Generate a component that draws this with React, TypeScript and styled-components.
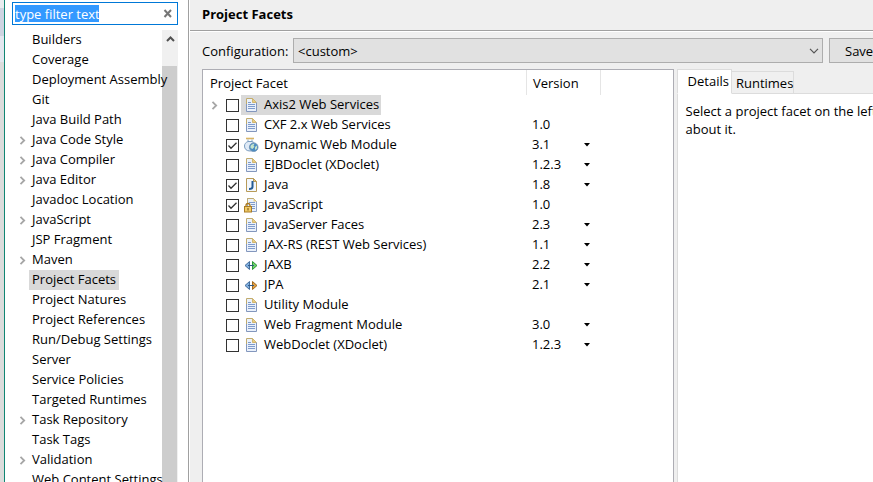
import React, { useState } from "react";
import styled, { createGlobalStyle, css } from "styled-components";

const GlobalStyle = createGlobalStyle`
  * { box-sizing: border-box; }
  body { margin: 0; overflow: hidden; }
  body, button, input, select {
    font-family: "Open Sans", "Noto Sans", sans-serif;
    font-size: 13px;
    line-height: 18px;
    color: #000;
  }
`;

const Desktop = styled.div`
  display: flex;
  height: 100vh;
  overflow: hidden;
  background: #efefef;
`;

const BackdropEdge = styled.div`
  flex: none;
  width: 5px;
  border-right: 1px solid #118673;
  background: linear-gradient(#e9ecef 0 8px, #ced4e1 8px 36px, #e3e7ef 36px 62px, #dcdcdc 62px);
`;

const Sidebar = styled.aside`
  flex: none;
  display: flex;
  flex-direction: column;
  width: 184px;
  padding: 2px 10px 0 7px;
  border-right: 1px solid #a0a0a0;
  background: #fff;
`;

const FilterBox = styled.div`
  flex: none;
  display: flex;
  align-items: center;
  height: 23px;
  border: 1px solid #0078d7;
`;

const FilterInput = styled.input`
  flex: 1;
  min-width: 0;
  height: 17px;
  margin: 0 0 0 2px;
  padding: 0;
  border: 0;
  outline: none;
  color: #fff;
  background: linear-gradient(#3399ff, #3399ff) no-repeat 0 0 / 84px 100%;
`;

const ClearButton = styled.button`
  display: flex;
  padding: 0 4px;
  border: 0;
  background: none;
`;

const TreeArea = styled.div`
  flex: 1;
  display: flex;
  min-height: 0;
  margin-top: 5px;
`;

const Tree = styled.ul`
  flex: 1;
  z-index: 1;
  min-width: 0;
  margin: 0;
  padding: 0;
  list-style: none;
`;

const TreeItem = styled.li`
  display: flex;
  align-items: center;
  height: 20px;
  white-space: nowrap;
`;

const ExpanderSlot = styled.span`
  flex: none;
  display: flex;
  justify-content: center;
  width: 20px;
`;

const TreeLabel = styled.a<{ $selected?: boolean }>`
  margin-left: -3px;
  padding: 0 3px 2px;
  color: inherit;
  text-decoration: none;
  background: ${(p) => (p.$selected ? "#d9d9d9" : "transparent")};
`;

const ScrollTrack = styled.div`
  flex: none;
  display: flex;
  flex-direction: column;
  width: 16px;
  background: #f0f0f0;
`;

const ScrollUp = styled.button`
  display: flex;
  align-items: center;
  justify-content: center;
  height: 36px;
  padding: 0 0 18px;
  border: 0;
  background: none;
`;

const ScrollThumb = styled.div`
  flex: 1;
  margin-right: 1px;
  background: #cdcdcd;
`;

const Main = styled.main`
  flex: 1;
  display: flex;
  flex-direction: column;
  min-width: 0;
  border-left: 1px solid #fff;
`;

const Title = styled.h1`
  margin: 0;
  padding: 5px 12px 7px;
  border-bottom: 1px solid #a0a0a0;
  font-size: 13px;
  line-height: 18px;
`;

const Configuration = styled.div`
  flex: none;
  display: flex;
  align-items: center;
  height: 32px;
  padding: 6px 0 0 12px;
  border-top: 1px solid #fff;
`;

const ConfigLabel = styled.label`
  flex: none;
  width: 91px;
`;

const SelectWrap = styled.span`
  flex: 1;
  display: grid;
  align-items: center;
  height: 25px;
  > * { grid-area: 1 / 1; }
  > svg { justify-self: end; margin-right: 4px; pointer-events: none; }
`;

const Select = styled.select`
  width: 100%;
  height: 25px;
  padding: 0 20px 0 4px;
  border: 1px solid #adadad;
  border-radius: 0;
  appearance: none;
  background: #e1e1e1;
`;

const SaveButton = styled.button`
  flex: none;
  width: 94px;
  height: 25px;
  margin: 0 -50px 0 6px;
  padding: 0 0 0 15px;
  border: 1px solid #adadad;
  background: #e1e1e1;
  text-align: left;
`;

const Panels = styled.div`
  flex: 1;
  display: flex;
  gap: 3px;
  min-height: 0;
  margin-top: 6px;
  padding-left: 12px;
`;

const FacetPane = styled.section`
  flex: 471 1 0;
  min-width: 0;
  overflow: hidden;
  border: 1px solid #adadb4;
  border-bottom: 0;
  background: #fff;
`;

const FacetTable = styled.table`
  width: 100%;
  border-collapse: separate;
  border-spacing: 0;
  table-layout: fixed;
`;

const NameCol = styled.col` width: 324px; `;
const VersionCol = styled.col` width: 74px; `;

const HeadCell = styled.th`
  height: 25px;
  padding: 1px 0 0 6px;
  border-right: 1px solid #e5e5e5;
  font-weight: 400;
  text-align: left;
  &:first-child { padding-left: 7px; }
  &:last-child { border-right: 0; }
`;

const Cell = styled.td`
  height: 20px;
  padding: 0;
`;

const FacetName = styled.div`
  display: flex;
  align-items: center;
  height: 20px;
  padding-left: 1px;
  white-space: nowrap;
`;

const Check = styled.input`
  appearance: none;
  width: 13px;
  height: 13px;
  margin: 0;
  border: 1px solid #333;
  background: #fff;
`;

const CheckBoxWrap = styled.span`
  flex: none;
  display: grid;
  width: 15px;
  margin: 1px 0 0 2px;
  > * { grid-area: 1 / 1; }
  > svg { pointer-events: none; }
`;

const FacetLabel = styled.label<{ $selected?: boolean }>`
  display: flex;
  align-items: center;
  gap: 4px;
  height: 20px;
  padding: 0 2px 0 3px;
  ${(p) => p.$selected && css` background: #d9d9d9; `}
`;

const CellText = styled.span`
  padding-bottom: 2px;
`;

const Version = styled.div`
  display: flex;
  align-items: center;
  height: 20px;
  padding-left: 5px;
`;

const VersionText = styled(CellText)`
  width: 52px;
`;

const VersionMenu = styled.button`
  display: flex;
  padding: 0;
  border: 0;
  background: none;
`;

const DetailPane = styled.section`
  flex: 197 1 0;
  display: flex;
  flex-direction: column;
  min-width: 0;
`;

const TabBar = styled.div`
  flex: none;
  display: flex;
  align-items: flex-end;
  height: 25px;
`;

const Tab = styled.button<{ $active?: boolean }>`
  height: ${(p) => (p.$active ? 25 : 23)}px;
  padding: ${(p) => (p.$active ? "0 2px 2px 10px" : "0 0 0 4px")};
  border: 1px solid #dcdcdc;
  border-left-width: ${(p) => (p.$active ? 1 : 0)}px;
  border-bottom-color: ${(p) => (p.$active ? "#fff" : "#dcdcdc")};
  background: ${(p) => (p.$active ? "#fff" : "#f0f0f0")};
  white-space: nowrap;
`;

const TabFill = styled.span`
  flex: 1;
  border-bottom: 1px solid #dcdcdc;
`;

const Details = styled.div`
  flex: 1;
  padding: 8px 0 0 8px;
  overflow: hidden;
  border-left: 1px solid #dcdcdc;
  background: #fff;
  white-space: nowrap;
`;

const DetailLine = styled.p`
  margin: 0;
`;

const Expander = () => (
  <svg width="7" height="9" viewBox="0 0 7 9" fill="none" stroke="#a6a6a6" strokeWidth="1.8">
    <path d="M1.5 .8 5.2 4.5 1.5 8.2" />
  </svg>
);

const PageIcon = () => (
  <svg width="16" height="16" viewBox="0 0 16 16">
    <path d="M2.5 1.5h6l4 4v9h-10z" fill="#eaf1fb" />
    <path d="M2.5 8V1.5h6" fill="none" stroke="#c0ab6f" />
    <path d="M8.5 1.5v4h4z" fill="#e9cd83" stroke="#c9ab5c" strokeWidth=".8" />
    <path d="M2.5 7v7.5h10V5.5" fill="none" stroke="#8397bd" />
    <path d="M4 5.5h3M4 7.5h7M4 9.5h7M4 11.500h7" stroke="#7f9bcb" />
  </svg>
);

const WebIcon = () => (
  <svg width="16" height="16" viewBox="0 0 16 16">
    <path d="M2 1.500h8" stroke="#d9b565" strokeWidth="1.600" />
    <path d="M4 2.500v2M8 2.500v2" stroke="#8ba9c6" />
    <path d="M4 4.500C1.500 5.500 .5 7 .5 9c0 3 2 5 5.500 5s5.500-2 5.500-5c0-2-1-3.500-3.500-4.500z" fill="#dfeaf6" stroke="#7b9dc0" />
    <circle cx="9.700" cy="10.200" r="4.300" fill="#4a8cc2" stroke="#6f93b5" strokeWidth=".9" />
    <path d="M6.500 9c1-2 3-2.300 4-2.300l-1 2 1 1-2 2.300-2-1zM11 10l2-1.500v3l-2 1.500z" fill="#c5e4cb" />
  </svg>
);

const JavaIcon = () => (
  <svg width="16" height="16" viewBox="0 0 16 16">
    <path d="M2.500 1.500h7l3 3v10h-10z" fill="#f2f7fd" stroke="#b89b58" />
    <path d="M9.500 1.500v3h3z" fill="#edce7e" stroke="#b89b58" />
    <path d="M8.500 4v6Q8.500 12 5 12" fill="none" stroke="#235b94" strokeWidth="2" />
  </svg>
);

const LockedPageIcon = () => (
  <svg width="16" height="16" viewBox="0 0 16 16">
    <path d="M3.500 1.500h6l3 3v10h-9z" fill="#eaf1fb" stroke="#8ea4c9" />
    <path d="M3.500 8V1.500h6l3 3" fill="none" stroke="#c0ab6f" />
    <path d="M9.500 1.500v3h3z" fill="#e9cd83" />
    <path d="M5 5.500h6M7 7.500h4M8 9.500h3M8 11.500h3" stroke="#7f9bcb" />
    <path d="M2 10V8.500a2 2 0 0 1 4 0V10" fill="none" stroke="#a77720" strokeWidth="1.300" />
    <rect x=".5" y="9.500" width="7" height="5.500" fill="#f0cb68" stroke="#a97b24" />
    <path d="M4 11v2.500" stroke="#765114" />
  </svg>
);

const ArrowsIcon = ({ color, edge }: { color: string; edge: string }) => (
  <svg width="16" height="16" viewBox="0 0 16 16">
    <path d="M5.500 4.500v8L1 8.500z" fill="#80afe0" stroke="#456f9e" />
    <path d="M8.500 4.500v8L13 8.500z" fill={color} stroke={edge} />
    <path d="M4 8.500h6" stroke="#315b86" />
  </svg>
);

const icons = {
  page: <PageIcon />,
  web: <WebIcon />,
  java: <JavaIcon />,
  locked: <LockedPageIcon />,
  jaxb: <ArrowsIcon color="#6fd36b" edge="#2f963a" />,
  jpa: <ArrowsIcon color="#e1a044" edge="#a36a20" />,
};

type Facet = {
  name: string;
  icon: keyof typeof icons;
  version?: string;
  menu?: boolean;
  checked?: boolean;
  expandable?: boolean;
};

const facets: Facet[] = [
  { name: "Axis2 Web Services", icon: "page", expandable: true },
  { name: "CXF 2.x Web Services", icon: "page", version: "1.0" },
  { name: "Dynamic Web Module", icon: "web", version: "3.1", menu: true, checked: true },
  { name: "EJBDoclet (XDoclet)", icon: "page", version: "1.2.3", menu: true },
  { name: "Java", icon: "java", version: "1.8", menu: true, checked: true },
  { name: "JavaScript", icon: "locked", version: "1.0", checked: true },
  { name: "JavaServer Faces", icon: "page", version: "2.3", menu: true },
  { name: "JAX-RS (REST Web Services)", icon: "page", version: "1.1", menu: true },
  { name: "JAXB", icon: "jaxb", version: "2.2", menu: true },
  { name: "JPA", icon: "jpa", version: "2.1", menu: true },
  { name: "Utility Module", icon: "page" },
  { name: "Web Fragment Module", icon: "page", version: "3.0", menu: true },
  { name: "WebDoclet (XDoclet)", icon: "page", version: "1.2.3", menu: true },
];

const pages = [
  "Builders", "Coverage", "Deployment Assembly", "Git", "Java Build Path",
  "Java Code Style", "Java Compiler", "Java Editor", "Javadoc Location",
  "JavaScript", "JSP Fragment", "Maven", "Project Facets", "Project Natures",
  "Project References", "Run/Debug Settings", "Server", "Service Policies",
  "Targeted Runtimes", "Task Repository", "Task Tags", "Validation",
  "Web Content Settings",
];

const expandablePages = new Set([
  "Java Code Style", "Java Compiler", "Java Editor", "JavaScript", "Maven",
  "Task Repository", "Validation",
]);

function FacetRow({ facet, selected }: { facet: Facet; selected: boolean }) {
  const [checked, setChecked] = useState(!!facet.checked);
  const id = "facet-" + facet.name.replace(/\W+/g, "-");
  return (
    <tr>
      <Cell>
        <FacetName>
          <ExpanderSlot>{facet.expandable && <Expander />}</ExpanderSlot>
          <CheckBoxWrap>
            <Check id={id} type="checkbox" checked={checked} onChange={() => setChecked(!checked)} />
            {checked && (
              <svg width="13" height="13" viewBox="0 0 13 13" fill="none" stroke="#333" strokeWidth="1.3">
                <path d="M2.500 6.500 5 9.200 10.500 3.700" />
              </svg>
            )}
          </CheckBoxWrap>
          <FacetLabel htmlFor={id} $selected={selected}>
            {icons[facet.icon]}
            <CellText>{facet.name}</CellText>
          </FacetLabel>
        </FacetName>
      </Cell>
      <Cell>
        <Version>
          <VersionText>{facet.version}</VersionText>
          {facet.menu && (
            <VersionMenu aria-label={"Change version of " + facet.name}>
              <svg width="6" height="4" viewBox="0 0 6 4"><path d="M0 0h6L3 3.500z" /></svg>
            </VersionMenu>
          )}
        </Version>
      </Cell>
      <Cell />
    </tr>
  );
}

export default function App() {
  const [filter, setFilter] = useState("type filter text");
  return (
    <Desktop>
      <GlobalStyle />
      <BackdropEdge />
      <Sidebar>
        <FilterBox>
          <FilterInput aria-label="Filter" value={filter} onChange={(e) => setFilter(e.target.value)} />
          <ClearButton aria-label="Clear">
            <svg width="10" height="9" viewBox="0 0 10 9" stroke="#767676" strokeWidth="2">
              <path d="M1.500 1 8 8M8 1 1.500 8" />
            </svg>
          </ClearButton>
        </FilterBox>
        <TreeArea>
          <Tree>
            {pages.map((page) => (
              <TreeItem key={page}>
                <ExpanderSlot>{expandablePages.has(page) && <Expander />}</ExpanderSlot>
                <TreeLabel href="#" $selected={page === "Project Facets"}>{page}</TreeLabel>
              </TreeItem>
            ))}
          </Tree>
          <ScrollTrack>
            <ScrollUp aria-label="Scroll up">
              <svg width="9" height="6" viewBox="0 0 9 6" fill="none" stroke="#505050" strokeWidth="2">
                <path d="M1 5 4.500 1.500 8 5" />
              </svg>
            </ScrollUp>
            <ScrollThumb />
          </ScrollTrack>
        </TreeArea>
      </Sidebar>
      <Main>
        <Title>Project Facets</Title>
        <Configuration>
          <ConfigLabel htmlFor="configuration">Configuration:</ConfigLabel>
          <SelectWrap>
            <Select id="configuration"><option>&lt;custom&gt;</option></Select>
            <svg width="10" height="6" viewBox="0 0 10 6" fill="none" stroke="#555" strokeWidth="1.200">
              <path d="M1 .8 5 4.800 9 .8" />
            </svg>
          </SelectWrap>
          <SaveButton>Save</SaveButton>
        </Configuration>
        <Panels>
          <FacetPane>
            <FacetTable>
              <colgroup><NameCol /><VersionCol /><col /></colgroup>
              <thead>
                <tr>
                  <HeadCell>Project Facet</HeadCell>
                  <HeadCell>Version</HeadCell>
                  <HeadCell />
                </tr>
              </thead>
              <tbody>
                {facets.map((facet, i) => <FacetRow key={facet.name} facet={facet} selected={i === 0} />)}
              </tbody>
            </FacetTable>
          </FacetPane>
          <DetailPane>
            <TabBar role="tablist">
              <Tab role="tab" aria-selected="true" $active>Details</Tab>
              <Tab role="tab" aria-selected="false">Runtimes</Tab>
              <TabFill />
            </TabBar>
            <Details role="tabpanel">
              <DetailLine>Select a project facet on the left</DetailLine>
              <DetailLine>about it.</DetailLine>
            </Details>
          </DetailPane>
        </Panels>
      </Main>
    </Desktop>
  );
}
